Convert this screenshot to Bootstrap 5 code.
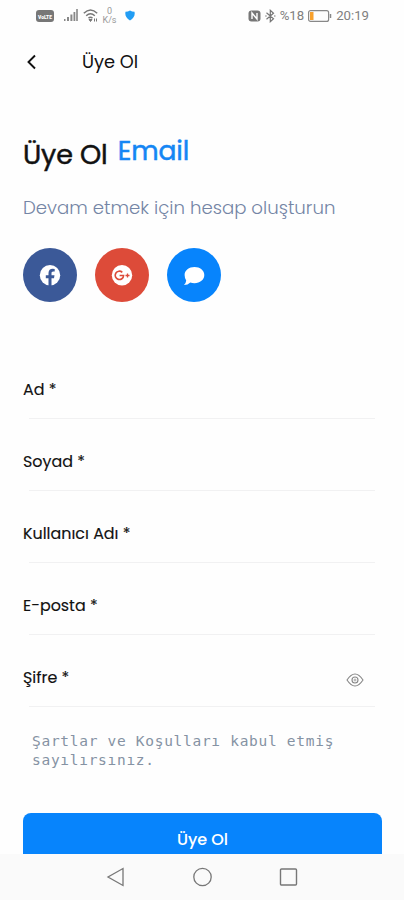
<!DOCTYPE html>
<html lang="tr">
<head>
<meta charset="utf-8">
<meta name="viewport" content="width=device-width, initial-scale=1">
<title>Üye Ol</title>
<link href="https://cdn.jsdelivr.net/npm/bootstrap@5.3.0/dist/css/bootstrap.min.css" rel="stylesheet">
<style>
body{font-family:Poppins,Inter,sans-serif;color:#111;background:#fefefe}
.screen{height:900px}
svg{display:block;flex:none}
.status{height:32px;padding:0 35px 0 36px;color:#808080;font-family:Roboto,sans-serif}
.s-text{font-size:13.2px;line-height:16px}
.s-speed{font-size:9px;line-height:9px;width:15px;color:#999;margin-left:3px}
.topbar{height:60px;padding-left:26px}
.bar-title{font-size:17.8px;line-height:24px;margin-left:45px}
.main-area{padding:0 22px 0 23px}
.heading{height:56px;margin-top:36px;font-size:27px;line-height:56px;letter-spacing:-.1px;-webkit-text-stroke:.5px currentColor}
.email{color:#1486f4;margin-left:10px;line-height:48px;font-size:26.6px}
.sub{color:#7485a5;font-size:18.15px;line-height:28px;margin-top:11px;font-weight:300;white-space:nowrap}
.socials{gap:18px;margin-top:26px}
.soc{width:54px;height:54px}
.fb{background:#3b5998}.gp{background:#dd4b39}.msg{background:#0784fc}
.fields{margin-top:70px}
.field{height:72px;padding-top:6px}
.field label{font-size:15.9px;line-height:24px;-webkit-text-stroke:.15px currentColor}
.rule{height:1px;background:#f1f1f2;margin:16px 7px 0 6px}
.eye{margin-right:18px;margin-top:3px}
.terms{font-family:"DejaVu Sans Mono",monospace;font-size:14.5px;letter-spacing:.71px;line-height:19px;color:#8592a3;margin:0 0 0 9px}
.submit{height:41px;background:#0784fc;color:#fff;border-radius:8px 8px 0 0;font-size:16px;line-height:24px;padding:12px 0 0;border:0;margin-top:43px}
.sysnav{height:46px;background:#fafafa}
.sysnav svg{margin:0 31.5px}
</style>
<script src="https://cdn.jsdelivr.net/npm/bootstrap@5.3.0/dist/js/bootstrap.bundle.min.js"></script>
</head>
<body>
<div class="screen d-flex flex-column overflow-hidden">
  <div class="status d-flex align-items-center justify-content-between">
    <div class="d-flex align-items-center">
      <svg width="18" height="12" viewBox="0 0 18 12"><rect width="18" height="12" rx="3" fill="#777"/><text x="2" y="8.500" font-size="6" font-weight="900" fill="#fff" textLength="14" lengthAdjust="spacingAndGlyphs">VoLTE</text></svg>
      <svg class="ms-2" width="17" height="13" viewBox="0 0 17 13" fill="#888"><path d="M2 10h1.500v2H2zM5 8h2v4H5zM8.400 5.500h2V12h-2zM11.500 3h1.800v9h-1.800zM14.200 0h1.600v12h-1.600z"/></svg>
      <svg class="ms-1" width="16" height="14" viewBox="0 0 16 14" fill="none" stroke="#777" stroke-width="1.500"><path d="M.8 4.200Q7.500-2.300 14.200 4.200M3.200 6.700q4.300-4 8.600 0M5.500 9.100q2-1.700 4 0"/><path d="M6 10.500h3l-1.500 2zM11.500 9.500v3M13.500 9.500v3" fill="#777" stroke-width="1"/></svg>
      <div class="s-speed text-center">0<br>K/s</div>
      <svg width="10" height="11" viewBox="0 0 10 11" class="ms-2"><path d="M5 .4Q7 1.700 9.500 1.800 10.700 7 5 10.600-.7 7 .5 1.800 3 1.700 5 .4z" fill="#229df4"/></svg>
    </div>
    <div class="d-flex align-items-center">
      <svg width="13" height="12" viewBox="0 0 13 12" fill="none"><rect x=".5" y=".5" width="12" height="11" rx="3" fill="#777"/><path d="M4 9V3l5 6V3" stroke="#fff" stroke-width="1.400"/></svg>
      <svg class="ms-1" width="11" height="14" viewBox="0 0 11 14" fill="none" stroke="#777" stroke-width="1.200"><path d="M1.500 3.700l7 6-3.200 3V1.300l3.200 3-7 6M.2 7h1.500M9 7h1.500"/></svg>
      <span class="s-text ms-1">%18</span>
      <svg class="ms-1" width="24" height="12" viewBox="0 0 24 12"><rect x=".6" y=".6" width="20" height="10.800" rx="2" fill="none" stroke="#888" stroke-width="1.200"/><path d="M2 2h3.500v8H2z" fill="#f8a12c"/><path d="M22.500 4v4" stroke="#888" stroke-width="1.500"/></svg>
      <span class="s-text ms-1">20:19</span>
    </div>
  </div>
  <header class="topbar d-flex align-items-center">
    <svg width="11" height="16" viewBox="0 0 11 16"><path d="M9 1.500L2.500 8 9 14.500" fill="none" stroke="#111" stroke-width="1.900"/></svg>
    <span class="bar-title">Üye Ol</span>
  </header>
  <main class="main-area">
    <h1 class="heading d-flex fw-normal mb-0"><span>Üye Ol</span><span class="email">Email</span></h1>
    <p class="sub mb-0">Devam etmek için hesap oluşturun</p>
    <div class="socials d-flex">
      <a class="soc fb rounded-circle d-flex align-items-center justify-content-center" href="#" aria-label="Facebook"><svg width="22" height="22" viewBox="0 0 22 22"><circle cx="11" cy="11.300" r="10.200" fill="#fff"/><path d="M9.500 22v-7.800H6.800v-3h2.700V9c0-2.900 1.700-4.300 4.200-4.300l2 .2v2.600h-1.400c-1.400 0-1.800.8-1.800 1.700v2h3l-.5 3h-2.500V22z" fill="#3b5998"/></svg></a>
      <a class="soc gp rounded-circle d-flex align-items-center justify-content-center" href="#" aria-label="Google+"><svg width="22" height="22" viewBox="0 0 22 22" fill="none" stroke="#dd4b39"><circle cx="11" cy="11.300" r="10.200" fill="#fff" stroke="none"/><path d="M11.300 8.300a4.200 4.200 0 1 0 1.300 3.200H8.600" stroke-width="1.600"/><path d="M16.500 9.500v4M14.500 11.500h4" stroke-width="1.300"/></svg></a>
      <a class="soc msg rounded-circle d-flex align-items-center justify-content-center" href="#" aria-label="Mesaj"><svg width="22" height="22" viewBox="0 0 22 22"><path d="M11.500 3C17 3 21.300 6.300 21.300 11S17 19.200 11.500 19.200q-2.300 0-4.200-.8Q4.800 21 1 21q2-2 2.200-4.600Q1.600 14 1.600 11C1.600 6.300 6 3 11.500 3z" fill="#fff"/></svg></a>
    </div>
    <form class="fields">
      <div class="field"><label>Ad *</label><div class="rule"></div></div>
      <div class="field"><label>Soyad *</label><div class="rule"></div></div>
      <div class="field"><label>Kullanıcı Adı *</label><div class="rule"></div></div>
      <div class="field"><label>E-posta *</label><div class="rule"></div></div>
      <div class="field"><div class="d-flex align-items-center justify-content-between"><label>Şifre *</label><svg class="eye" width="18" height="14" viewBox="0 0 18 14" fill="none" stroke="#888" stroke-width="1.100"><path d="M1 7q8-12 16 0-8 12-16 0z"/><circle cx="9" cy="7" r="3"/><circle cx="9" cy="7" r="1" stroke-width=".7"/></svg></div><div class="rule"></div></div>
      <p class="terms">Şartlar ve Koşulları kabul etmiş<br>sayılırsınız.</p>
      <button type="button" class="submit d-block w-100 fw-medium text-center">Üye Ol</button>
    </form>
  </main>
  <nav class="sysnav mt-auto d-flex align-items-center justify-content-center">
    <svg width="23" height="22" viewBox="0 0 23 22" fill="none" stroke="#777" stroke-width="1.300"><path d="M18 2.500v17L3 11z"/></svg>
    <svg width="23" height="22" viewBox="0 0 23 22" fill="none" stroke="#777" stroke-width="1.300"><circle cx="11.500" cy="11" r="8.700"/></svg>
    <svg width="23" height="22" viewBox="0 0 23 22" fill="none" stroke="#777" stroke-width="1.400"><rect x="3.500" y="3" width="16" height="16" rx="1"/></svg>
  </nav>
</div>
</body>
</html>
